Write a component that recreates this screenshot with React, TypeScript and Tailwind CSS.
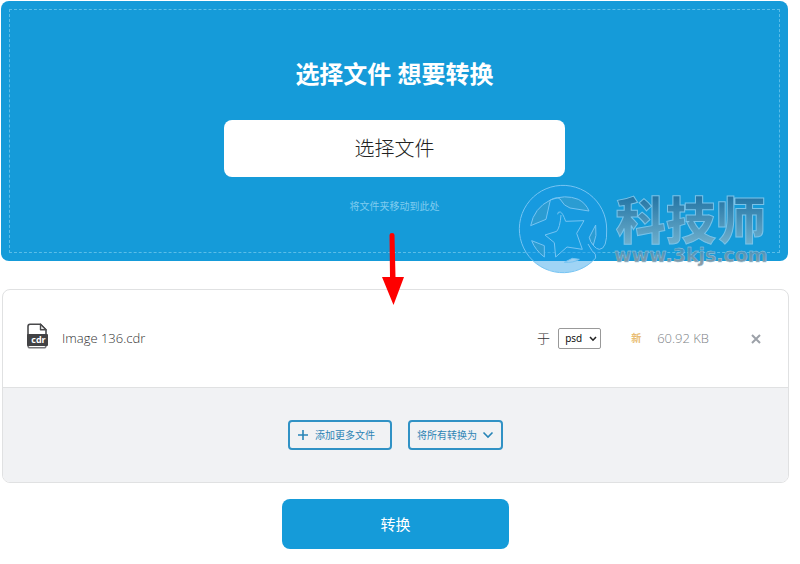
import { ReactNode, useState } from "react";

type FileType = {
    name: string;
    format: string;
    size: string;
}

const formats = ["psd", "png", "jpg", "pdf", "svg"];

function FileIcon () {
    return (
        <svg className="mb-1.5 -ml-px w-6 h-[26px] shrink-0" viewBox="0 0 24 26" fill="none" aria-hidden="true">
            <path d="M2 12V3.6C2 2 2.6 1.3 4 1.3H14.5L20 6.8V12" stroke="#4a4a4c" strokeWidth="1.6" />
            <path d="M14.5 1.3V6.8H20Z" fill="#eee" stroke="#4a4a4c" strokeWidth="1.4" strokeLinejoin="round" />
            <path d="M2 20V22.5C2 24.2 2.8 24.8 4 24.8H18C19.4 24.8 20 24 20 22.5V20" stroke="#77777a" strokeWidth="1.6" />
            <rect x="1" y="11" width="21" height="12" rx="1" fill="#424244" />
            <text x="12.5" y="20" textAnchor="middle" fontSize="9" fontWeight="700" fill="#fff" className="font-['Open_Sans',sans-serif]">cdr</text>
        </svg>
    )
}

function Arrow () {
    return (
        <svg className="absolute left-1/2 top-[233px] -ml-[19px] w-6 h-[72px]" viewBox="0 0 24 72" aria-hidden="true">
            <path d="M8.5 2Q8.5 0 11 0Q13.5 0 13.5 2L14.5 44H23L12.5 72L1 44H9Z" fill="#fe0000" />
        </svg>
    )
}

function Watermark () {
    return (
        <svg className="absolute right-3 top-[180px] w-[278px] h-[100px]" viewBox="0 0 834 300" aria-label="科技师 www.3kjs.com">
            <defs>
                <linearGradient id="steel" x1="0" y1="0" x2="0" y2="1">
                    <stop offset="0.2" stopColor="#2273a3" />
                    <stop offset="0.9" stopColor="#70b0cd" />
                </linearGradient>
                <linearGradient id="site" x1="0" y1="0" x2="0" y2="1">
                    <stop offset="0.3" stopColor="#4794bd" />
                    <stop offset="0.9" stopColor="#8f9ba3" />
                </linearGradient>
            </defs>
            <circle cx="159" cy="147" r="131" fill="#1a98e8" fillOpacity="0.42" />
            <g fill="#2b9cd2" stroke="#76c4f3" strokeWidth="3" strokeLinejoin="round">
                <path d="M257 234A131 131 0 1 1 290 147Q292 207 268 208Q250 206 238 172" fill="none" />
                <path d="M257 234Q260 222 246 212L234 192" fill="none" />
                <path d="M62 137Q72 84 121 60L108 118Z" />
                <path d="M121 60Q140 49 150 57Q162 79 180 84L237 93Q228 70 205 58Q165 42 121 60" />
                <path d="M238 172L257 135Q262 168 250 195Q240 186 238 172Z" />
                <path d="M65 182L103 197V231Q76 211 65 182Z" />
                <path d="M163 247L187 235L208 238Q190 249 163 247Z" fill="#9fd1f1" />
                <path d="M143 103Q143 94 151 96Q158 98 167 124L222 122L200 160L217 208L171 201L137 231L133 188L105 165L140 154Q150 143 153 105" fill="#159de0" />
            </g>
            <text x="317" y="176" fontSize="150" fontWeight="900" fill="url(#steel)" stroke="#79c3e9" strokeWidth="3" className="font-['Noto_Sans_CJK_SC',sans-serif]">科技师</text>
            <text x="312" y="246" fontSize="57" fontWeight="700" fill="url(#site)" stroke="#a3d0e5" strokeWidth="1" className="font-['DejaVu_Sans',sans-serif]">www.3kjs.com</text>
        </svg>
    )
}

function OutlineButton ({ children }: { children: ReactNode }) {
    return (
        <button type="button" className="h-[30px] px-[7px] flex items-center gap-1 rounded-sm border-2 border-[#3192c5] text-[10px] text-[#2d84b4]">
            {children}
        </button>
    )
}

export default function App () {

    const [format, setFormat] = useState("psd");
    const file: FileType = { name: "Image 136.cdr", format: "cdr", size: "60.92 KB" };

    return (
        <div className="relative bg-white pt-px pl-px pr-3 pb-4 font-['Open_Sans','Noto_Sans_CJK_SC',sans-serif]">

            <section className="rounded-lg bg-[#159bd9] p-2">
                <div className="flex flex-col items-center border border-dashed border-[#5abde8] pt-12 pb-9">
                    <h1 className="text-2xl leading-8 font-bold text-white">选择文件 想要转换</h1>
                    <button type="button" className="mt-[30px] h-[57px] w-[341px] rounded-lg bg-white text-xl font-light text-[#222]">选择文件</button>
                    <p className="mt-[19px] text-[10px] leading-5 text-[#7fcbef]">将文件夹移动到此处</p>
                </div>
            </section>

            <section className="mt-7 ml-px -mr-px overflow-hidden rounded-lg border border-[#e0e1e2]">
                <div className="flex h-[97px] items-center px-6">
                    <FileIcon />
                    <span className="ml-3 text-[13px] font-light text-[#333]">{file.name}</span>
                    <label htmlFor="format" className="ml-auto text-[13px] font-light text-[#333]">于</label>
                    <span className="relative ml-2">
                        <select
                            id="format"
                            value={format}
                            onChange={(e) => setFormat(e.target.value)}
                            className="block h-[21px] w-[43px] appearance-none rounded-xs border border-[#999] bg-white pl-1.5 text-[10px] text-black"
                        >
                            {formats.map((f) => <option key={f}>{f}</option>)}
                        </select>
                        <svg className="pointer-events-none absolute right-1 top-2 w-2 h-1.5" viewBox="0 0 8 6" fill="none" aria-hidden="true">
                            <path d="M1 1L4 4.2L7 1" stroke="#222" strokeWidth="1.6" />
                        </svg>
                    </span>
                    <span className="ml-[30px] text-[10px] font-bold text-[#e9bd74]">新</span>
                    <span className="ml-4 text-[13px] font-light text-[#7d8286]">{file.size}</span>
                    <button type="button" aria-label="删除" className="ml-[41px] mr-0.5">
                        <svg className="w-3 h-3" viewBox="0 0 12 12" aria-hidden="true">
                            <path d="M2 2L10 10M10 2L2 10" stroke="#9ca1a8" strokeWidth="2" />
                        </svg>
                    </button>
                </div>
                <div className="flex h-[95px] items-center justify-center gap-4 border-t border-[#e0e1e2] bg-[#f1f2f4]">
                    <OutlineButton>
                        <svg className="w-3 h-3" viewBox="0 0 12 12" aria-hidden="true">
                            <path d="M6 1V11M1 6H11" stroke="#2784b7" strokeWidth="1.6" />
                        </svg>
                        <span className="ml-0.5 mr-2">添加更多文件</span>
                    </OutlineButton>
                    <OutlineButton>
                        <span className="mr-px">将所有转换为</span>
                        <svg className="w-3 h-3" viewBox="0 0 12 12" fill="none" aria-hidden="true">
                            <path d="M1.5 3.5L6 8L10.5 3.5" stroke="#2784b7" strokeWidth="1.6" />
                        </svg>
                    </OutlineButton>
                </div>
            </section>

            <div className="mt-4 ml-px -mr-px flex justify-center">
                <button type="button" className="h-[50px] w-[227px] rounded-lg bg-[#159bd9] text-[15px] text-white">转换</button>
            </div>

            <Arrow />
            <Watermark />
        </div>
    )
}
